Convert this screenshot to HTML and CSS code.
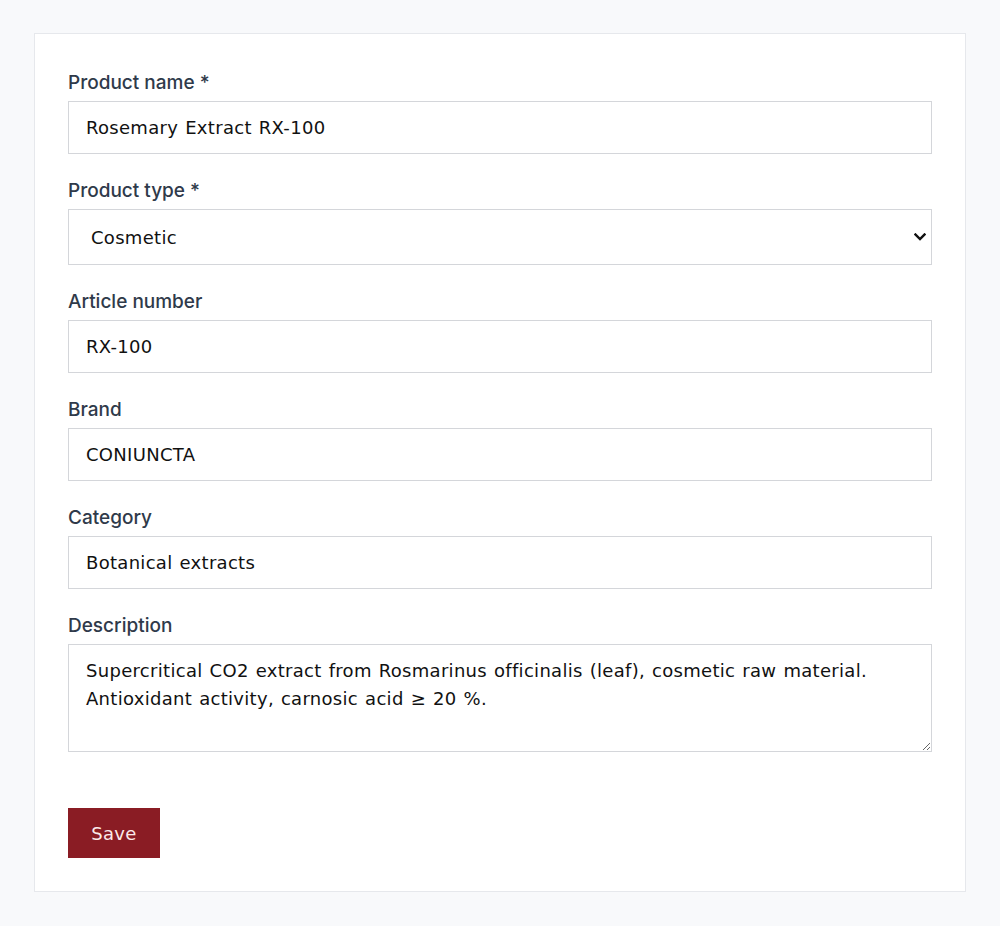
FILE: index.html
```html
<!DOCTYPE html>
<html lang="en">
<head>
<meta charset="utf-8">
<title>Edit product</title>
<link rel="stylesheet" href="styles.css">
</head>
<body>
  <form class="card">
    <div class="field">
      <label class="field-label" for="name">Product name *</label>
      <input class="control" id="name" type="text" value="Rosemary Extract RX-100">
    </div>
    <div class="field">
      <label class="field-label" for="type">Product type *</label>
      <div class="select-wrap">
        <select class="control select" id="type">
          <option selected>Cosmetic</option>
          <option>Food</option>
          <option>Pharmaceutical</option>
        </select>
        <svg class="select-arrow" viewBox="0 0 12 8" aria-hidden="true"><path d="M1.5 1.5 L6 6 L10.5 1.5" fill="none" stroke="#111" stroke-width="2.4" stroke-linecap="square"/></svg>
      </div>
    </div>
    <div class="field">
      <label class="field-label" for="article">Article number</label>
      <input class="control" id="article" type="text" value="RX-100">
    </div>
    <div class="field">
      <label class="field-label" for="brand">Brand</label>
      <input class="control" id="brand" type="text" value="CONIUNCTA">
    </div>
    <div class="field">
      <label class="field-label" for="category">Category</label>
      <input class="control" id="category" type="text" value="Botanical extracts">
    </div>
    <div class="field">
      <label class="field-label" for="desc">Description</label>
      <textarea class="control textarea" id="desc">Supercritical CO2 extract from Rosmarinus officinalis (leaf), cosmetic raw material. Antioxidant activity, carnosic acid ≥ 20 %.</textarea>
    </div>
    <div class="actions">
      <button class="btn-save" type="submit">Save</button>
    </div>
  </form>
</body>
</html>
```
FILE: styles.css
```css
* {
  box-sizing: border-box;
}

html,
body {
  margin: 0;
  background: #f8f9fb;
}

body {
  padding: 33px 34px;
  font-family: "DejaVu Sans", Inter, sans-serif;
  color: #111;
}

.card {
  display: flex;
  flex-direction: column;
  gap: 24px;
  background: #fff;
  border: 1px solid #e6e8ec;
  padding: 36px 33px 33px;
}

.field {
  display: flex;
  flex-direction: column;
  gap: 6px;
}

.field-label {
  font-family: Inter, "DejaVu Sans", sans-serif;
  font-size: 19px;
  line-height: 25px;
  font-weight: 500;
  color: #2f3a4a;
}

.control {
  display: block;
  width: 100%;
  height: 53px;
  margin: 0;
  padding: 12px 17px;
  font-family: inherit;
  font-size: 18px;
  line-height: 27px;
  letter-spacing: 0.3px;
  word-spacing: 1px;
  color: #111;
  background: #fff;
  border: 1px solid #d4d6da;
  border-radius: 0;
  outline: none;
}

.select-wrap {
  position: relative;
}

.select {
  height: 56px;
  padding: 12px 22px;
  appearance: none;
  -webkit-appearance: none;
}

.select-arrow {
  position: absolute;
  right: 6px;
  top: 24px;
  width: 12px;
  height: 8px;
  pointer-events: none;
}

.textarea {
  height: 108px;
  padding: 12px 17px;
  line-height: 28px;
  resize: vertical;
}

.actions {
  padding-top: 32px;
}

.btn-save {
  width: 92px;
  height: 50px;
  padding: 0;
  font-family: inherit;
  font-size: 18px;
  letter-spacing: 0.3px;
  color: #fbeaea;
  background: #8a1c24;
  border: none;
  border-radius: 0;
  cursor: pointer;
}
```
